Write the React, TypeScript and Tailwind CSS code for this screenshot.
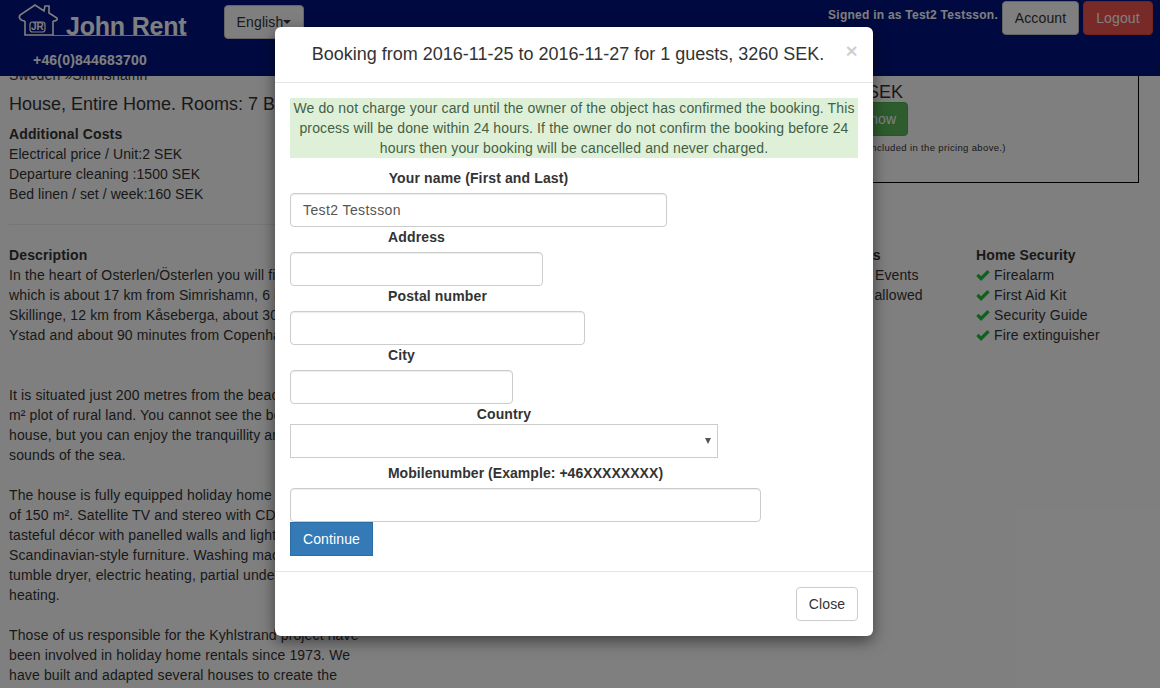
import React from "react";

function Check() {
  return (
    <svg viewBox="0 0 16 14" className="w-[14px] h-[13px] mr-1 shrink-0 fill-[#1fc23d]">
      <path d="M0.3 7.6 L2.9 5 L5.8 7.9 L13 0.7 L15.7 3.4 L5.8 13.3 Z" />
    </svg>
  );
}

function Logo() {
  return (
    <div className="relative h-[34px] w-[170px]">
      <svg viewBox="0 0 170 34" className="w-[170px] h-[34px] fill-none stroke-white stroke-[1.6]">
        <path d="M8 18 C4 18 1 15 3 12 L18 2 L27 8 L28 3 L32 3 L32 10 L40 15 C41 17 39 18 36 18" />
        <path d="M8 18 V32 H36 V18" />
        <path d="M36 32.5 H170" strokeWidth="0.8" />
        <rect x="13" y="19" width="15" height="10" rx="2.5" strokeWidth="1.2" />
      </svg>
      <span className="absolute left-[14px] top-[18px] text-[10px] font-bold leading-[12px] tracking-normal text-white">JR</span>
      <span className="absolute left-[49px] top-[9px] text-[25px] leading-[28px] font-bold text-white whitespace-nowrap tracking-[-0.2px]">
        John Rent
      </span>
    </div>
  );
}

function Field({ label, width, children, tight }: { label: string; width: string; children: React.ReactNode; tight?: boolean }) {
  return (
    <div className={`${width} text-center`}>
      <div className={`font-bold text-[14px] leading-[20px] h-[20px] whitespace-nowrap ${tight ? "tracking-[0.05px]" : ""}`}>{label}</div>
      {children}
    </div>
  );
}

const inputCls =
  "block w-full h-[34px] mt-[5px] border border-[#ccc] rounded-[4px] bg-white px-3 text-[14px] text-[#555] tracking-[0.4px] outline-none shadow-[inset_0_1px_1px_rgba(0,0,0,0.075)]";

export default function App() {
  return (
    <div className="relative h-[688px] w-full overflow-hidden bg-white text-[#333] text-[14px] leading-[20px] tracking-[0.13px] font-['Liberation_Sans',Arial,sans-serif]">
      {/* Navbar */}
      <header className="relative z-10 h-[76px] bg-[#001480] flex justify-between">
        <div className="flex items-start">
          <div className="pl-[17px] pt-[3px] w-[224px]">
            <Logo />
            <div className="pl-[16px] mt-[13px] font-bold text-white leading-[20px] tracking-[0.2px]">+46(0)844683700</div>
          </div>
          <button className="mt-[5px] h-[34px] w-[80px] rounded-[4px] bg-white border border-[#ccc] text-[#333] flex items-center justify-center">
            English
            <span className="w-0 h-0 border-x-[4px] border-x-transparent border-t-[4px] border-t-[#333]" />
          </button>
        </div>
        <div className="flex items-start pr-[7px] pt-[1px]">
          <span className="font-bold text-[12px] leading-[28px] text-white mr-[4px] tracking-[0.25px]">Signed in as Test2 Testsson.</span>
          <button className="h-[34px] w-[77px] rounded-[4px] bg-white border border-[#ccc] text-[#333] mr-[4px]">Account</button>
          <button className="h-[34px] w-[70px] rounded-[4px] bg-[#ee5450] border border-[#e4443f] text-white">Logout</button>
        </div>
      </header>

      {/* Page */}
      <main className="flex">
        <section className="flex-1 min-w-0 pl-[9px] pr-[10px] -mt-[11px] whitespace-nowrap">
          <div className="h-[20px]">Sweden »Simrishamn</div>
          <h4 className="mt-[9px] text-[18px] leading-[20px] tracking-normal">House, Entire Home. Rooms: 7 Bedrooms: 3 Beds: 8</h4>
          <div className="mt-[10px] font-bold">Additional Costs</div>
          <div className="tracking-[0.07px]">Electrical price / Unit:2 SEK</div>
          <div className="tracking-[0.07px]">Departure cleaning :1500 SEK</div>
          <div className="tracking-[0.07px]">Bed linen / set / week:160 SEK</div>
          <hr className="my-[20px] border-t border-[#eee]" />
          <div className="font-bold">Description</div>
          <p>
            In the heart of Osterlen/Österlen you will find Kyhlstrand,
            <br />
            which is about 17 km from Simrishamn, 6 km from
            <br />
            Skillinge, 12 km from Kåseberga, about 30 km from
            <br />
            Ystad and about 90 minutes from Copenhagen.
            <br />
            <br />
            <br />
            It is situated just 200 metres from the beach on a 2,500
            <br />
            m² plot of rural land. You cannot see the beach from the
            <br />
            house, but you can enjoy the tranquillity and hear the
            <br />
            sounds of the sea.
            <br />
            <br />
            The house is fully equipped holiday home with a floor area
            <br />
            of 150 m². Satellite TV and stereo with CD player and
            <br />
            tasteful décor with panelled walls and light
            <br />
            Scandinavian-style furniture. Washing machine and
            <br />
            tumble dryer, electric heating, partial underfloor
            <br />
            heating.
            <br />
            <br />
            Those of us responsible for the Kyhlstrand project have
            <br />
            been involved in holiday home rentals since 1973. We
            <br />
            have built and adapted several houses to create the
          </p>
        </section>

        <aside className="w-[360px] shrink-0">
          <div className="h-[108px] -mt-[1px] pt-[7px] mr-[21px] border-r border-b border-black pl-[22px]">
            <div className="text-[18px] leading-[20px] h-[20px] tracking-normal">3260 SEK</div>
            <button className="block h-[34px] w-[86px] rounded-[4px] bg-[#5cb85c] border border-[#4cae4c] text-white whitespace-nowrap">
              Book now
            </button>
            <div className="mt-[6px] text-[9.5px] leading-[12px] tracking-[0.35px] whitespace-nowrap">
              (Cleaning included in the pricing above.)
            </div>
          </div>
          <div className="flex mt-[62px]">
            <div className="w-[176px]">
              <div className="font-bold">Other Rules</div>
              <div className="flex items-center -ml-[3px]"><Check />Wedding Events</div>
              <div className="flex items-center -ml-[3px]"><Check />Smoking allowed</div>
            </div>
            <div>
              <div className="font-bold">Home Security</div>
              <div className="flex items-center"><Check />Firealarm</div>
              <div className="flex items-center"><Check />First Aid Kit</div>
              <div className="flex items-center"><Check />Security Guide</div>
              <div className="flex items-center"><Check />Fire extinguisher</div>
            </div>
          </div>
        </aside>
      </main>

      {/* Modal */}
      <div className="absolute inset-0 z-20 bg-black/50 flex justify-center items-start pt-[27px] pr-[12px]">
        <div className="w-[598px] h-[609px] bg-white rounded-[6px] shadow-[0_5px_15px_rgba(0,0,0,0.5)] flex flex-col">
          <div className="relative h-[56px] border-b border-[#e5e5e5] text-center">
            <h4 className="pt-[17px] text-[18px] leading-[20px] pr-[12px] tracking-normal">
              Booking from 2016-11-25 to 2016-11-27 for 1 guests, 3260 SEK.
            </h4>
            <span className="absolute right-[15px] top-[13px] text-[21px] leading-[21px] font-bold text-black/20">×</span>
          </div>
          <div className="p-[15px] flex-1 min-h-0">
            <div className="h-[60px] mb-[10px] bg-[#dff0d8] text-[#445f44] text-center">
              We do not charge your card until the owner of the object has confirmed the booking. This
              process will be done within 24 hours. If the owner do not confirm the booking before 24
              hours then your booking will be cancelled and never charged.
            </div>
            <Field label="Your name (First and Last)" width="w-[377px]">
              <input className={inputCls} defaultValue="Test2 Testsson" />
            </Field>
            <Field label="Address" width="w-[253px]">
              <input className={inputCls} />
            </Field>
            <Field label="Postal number" width="w-[295px]">
              <input className={inputCls} />
            </Field>
            <Field label="City" width="w-[223px]">
              <input className={inputCls} />
            </Field>
            <Field label="Country" width="w-[428px]">
              <div className="relative">
                <select className="block w-full h-[34px] border border-[#ccc] bg-white appearance-none outline-none" />
                <svg viewBox="0 0 6 6" className="absolute right-[7px] top-[14px] w-[6px] h-[6px] fill-[#555]">
                  <path d="M0 0 H6 L3 6 Z" />
                </svg>
              </div>
            </Field>
            <div className="h-[5px]" />
            <Field label="Mobilenumber (Example: +46XXXXXXXX)" width="w-[471px]" tight>
              <input className={inputCls} />
            </Field>
            <button className="block h-[34px] w-[83px] bg-[#337ab7] border border-[#2e6da4] text-white">Continue</button>
          </div>
          <div className="h-[65px] border-t border-[#e5e5e5] flex justify-end items-start pt-[15px] pr-[15px]">
            <button className="h-[34px] w-[62px] rounded-[4px] bg-white border border-[#ccc] text-[#333]">Close</button>
          </div>
        </div>
      </div>
    </div>
  );
}
